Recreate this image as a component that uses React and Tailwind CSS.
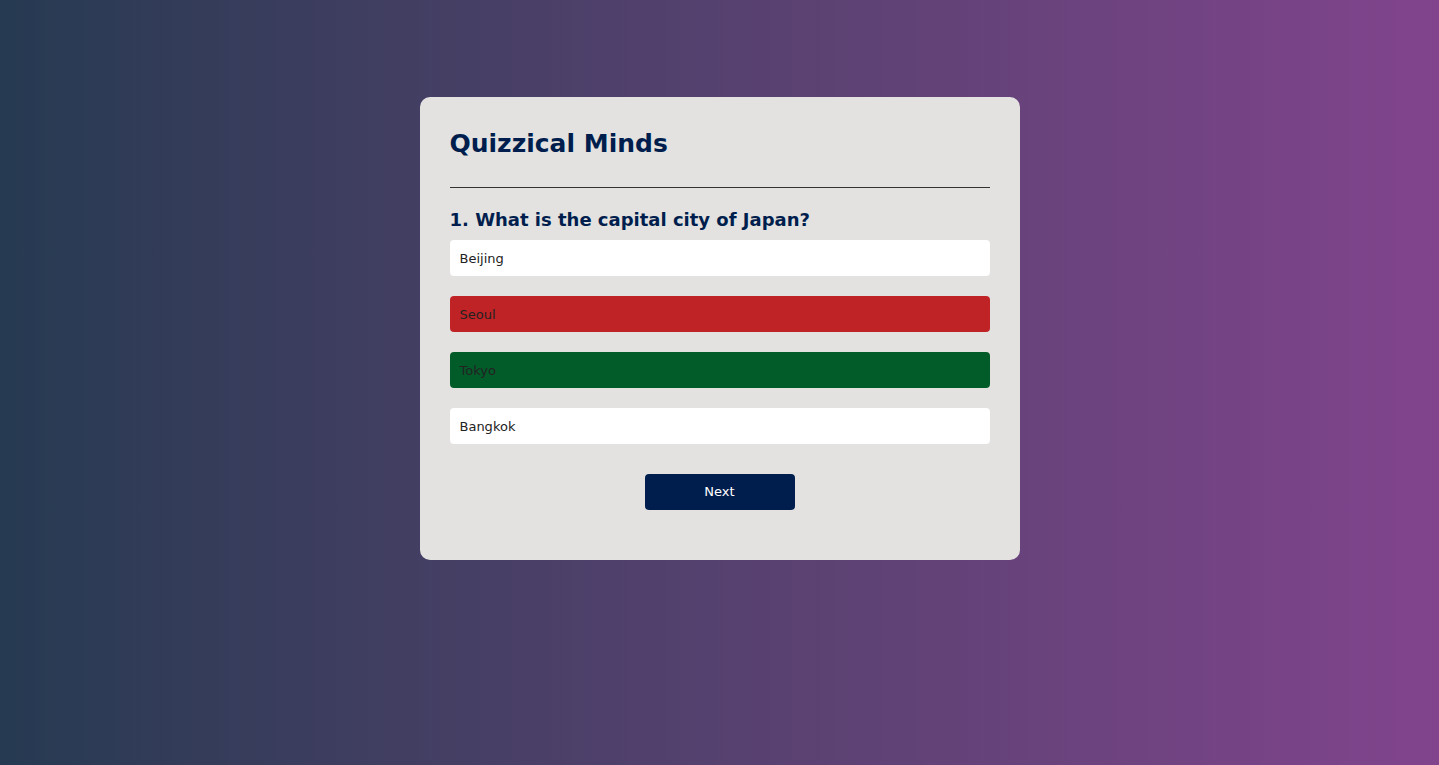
const OPTIONS = [
  { label: 'Beijing', cls: 'bg-white' },
  { label: 'Seoul', cls: 'bg-[#c02326]' },
  { label: 'Tokyo', cls: 'bg-[#025c2a]' },
  { label: 'Bangkok', cls: 'bg-white' },
]

export default function App() {
  return (
    <div className="min-h-screen bg-gradient-to-r from-[#263a52] to-[#81448d] pt-[97px] font-['DejaVu_Sans',Verdana,sans-serif]">
      <div className="mx-auto w-[600px] rounded-[10px] bg-[#e3e2e1] p-[30px]">
        <h1 className="border-b border-[#333] pt-[2px] pb-[28px] text-[25px] leading-[30px] font-bold text-[#001e4d]">
          Quizzical Minds
        </h1>
        <div className="py-5">
          <h2 className="pt-[1px] text-[18px] leading-[21px] font-bold text-[#001e4d]">
            1. What is the capital city of Japan?
          </h2>
          <div className="mt-[10px] flex flex-col gap-5">
            {OPTIONS.map((o) => (
              <button
                key={o.label}
                type="button"
                className={`h-9 w-full rounded-[4px] px-[10px] pt-[1px] text-left text-[13px] text-[#222] ${o.cls}`}
              >
                {o.label}
              </button>
            ))}
          </div>
          <button
            type="button"
            className="mx-auto mt-[30px] block h-9 w-[150px] rounded-[4px] bg-[#001e4d] text-[13px] font-medium text-white"
          >
            Next
          </button>
        </div>
      </div>
    </div>
  )
}
